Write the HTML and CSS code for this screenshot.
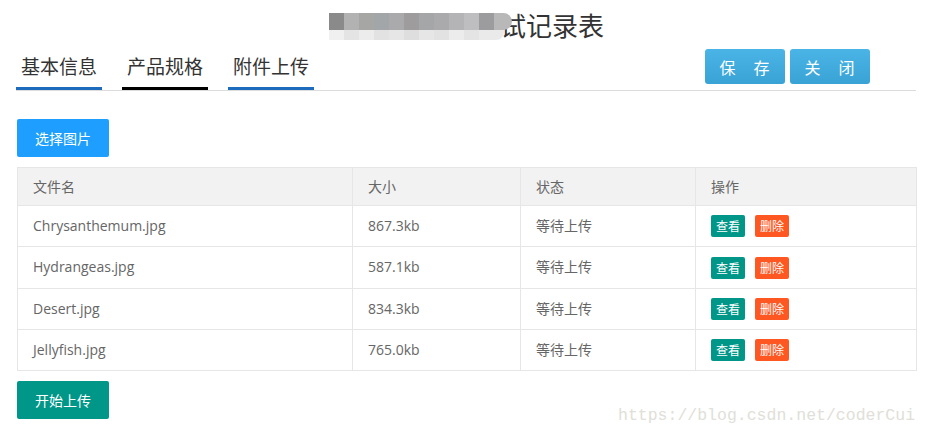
FILE: index.html
```html
<!DOCTYPE html>
<html lang="zh-CN">
<head>
<meta charset="utf-8">
<title>测试记录表</title>
<link rel="stylesheet" href="styles.css">
</head>
<body>
<div class="page">
  <h1 class="title"><span class="mosaic"><span class="mosaic-top"></span><span class="mosaic-bottom"></span></span><span class="title-text">试记录表</span></h1>
  <div class="nav">
    <div class="tab tab-blue">基本信息</div>
    <div class="tab tab-black">产品规格</div>
    <div class="tab tab-blue">附件上传</div>
    <div class="actions">
      <button class="act-btn">保　存</button>
      <button class="act-btn">关　闭</button>
    </div>
  </div>
  <div class="content">
    <button class="btn btn-normal">选择图片</button>
    <table class="files">
      <colgroup>
        <col class="c1"><col class="c2"><col class="c3"><col class="c4">
      </colgroup>
      <thead>
        <tr><th>文件名</th><th>大小</th><th>状态</th><th>操作</th></tr>
      </thead>
      <tbody>
        <tr><td>Chrysanthemum.jpg</td><td>867.3kb</td><td>等待上传</td><td><span class="xs xs-view">查看</span><span class="xs xs-del">删除</span></td></tr>
        <tr><td>Hydrangeas.jpg</td><td>587.1kb</td><td>等待上传</td><td><span class="xs xs-view">查看</span><span class="xs xs-del">删除</span></td></tr>
        <tr><td>Desert.jpg</td><td>834.3kb</td><td>等待上传</td><td><span class="xs xs-view">查看</span><span class="xs xs-del">删除</span></td></tr>
        <tr><td>Jellyfish.jpg</td><td>765.0kb</td><td>等待上传</td><td><span class="xs xs-view">查看</span><span class="xs xs-del">删除</span></td></tr>
      </tbody>
    </table>
    <button class="btn btn-green">开始上传</button>
  </div>
  <div class="watermark">https://blog.csdn.net/coderCui</div>
</div>
</body>
</html>
```
FILE: styles.css
```css
* { box-sizing: border-box; }
html, body { margin: 0; padding: 0; background: #fff; }
body {
  font-family: "Open Sans", "Noto Sans CJK SC", sans-serif;
  color: #333;
  width: 929px;
  height: 437px;
  overflow: hidden;
}
.page { position: relative; width: 929px; height: 437px; }

.title {
  margin: 0;
  height: 44px;
  display: flex;
  justify-content: center;
  align-items: flex-start;
  font-weight: normal;
  font-size: 26px;
  line-height: 30px;
  padding-top: 10px;
  padding-left: 4px;
  color: #333;
  font-family: "Noto Sans CJK SC", sans-serif;
}
.mosaic {
  position: relative;
  z-index: 1;
  display: flex;
  flex-direction: column;
  width: 183px;
  margin-top: 3px;
  margin-right: -12px;
}
.mosaic-top {
  height: 17px;
  border-radius: 0 10px 10px 0;
  background: linear-gradient(to right,
    #8a8a8a 0 15px, #b2b2b2 15px 30px, #a6a6a4 30px 45px, #a2a6a8 45px 60px,
    #aaaaac 60px 75px, #9e9c9c 75px 90px, #a4a6a8 90px 105px, #aaaaac 105px 120px,
    #b4b4b6 120px 135px, #bebec0 135px 150px, #9c9c9e 150px 165px, #b8b8b8 165px 183px);
}
.mosaic-bottom {
  height: 10px;
  margin-right: 8px;
  border-radius: 0 0 8px 0;
  background: linear-gradient(to right,
    #f0f0f0 0 15px, #e4e4e4 15px 30px, #ececec 30px 45px, #e2e2e2 45px 60px,
    #e6e6e6 60px 75px, #dedede 75px 90px, #e6e6e6 90px 105px, #e2e2e2 105px 120px,
    #ececec 120px 135px, #e4e4e4 135px 150px, #eaeaea 150px 175px);
}

.nav {
  display: flex;
  align-items: flex-start;
  margin: 0 13px 0 16px;
  border-bottom: 1px solid #dcdcdc;
  gap: 20px;
}
.tab {
  width: 86px;
  text-align: center;
  font-family: "Noto Sans CJK SC", sans-serif;
  font-size: 19px;
  line-height: 24px;
  padding: 10px 0 9px;
  color: #333;
  border-bottom: 3px solid #1c6bbd;
}
.tab-black { border-bottom-color: #000; }
.actions {
  margin-left: auto;
  margin-right: 46px;
  margin-top: 5px;
  display: flex;
  gap: 5px;
}
.act-btn {
  width: 80px;
  height: 35px;
  border: 0;
  border-radius: 3px;
  background: linear-gradient(#4bb4e6, #3aa3d6);
  color: #fff;
  font-family: "Noto Sans CJK SC", sans-serif;
  font-size: 16px;
  letter-spacing: 1px;
  padding: 0;
}

.content {
  padding: 28px 13px 0 17px;
  display: flex;
  flex-direction: column;
  align-items: flex-start;
}
.btn {
  height: 38px;
  line-height: 38px;
  padding: 0 18px;
  border: 0;
  border-radius: 2px;
  color: #fff;
  font-family: "Noto Sans CJK SC", sans-serif;
  font-size: 14px;
}
.btn-normal { background: #1e9fff; }
.btn-green { background: #009688; margin-top: 10px; }

.files {
  margin-top: 10px;
  width: 899px;
  border-collapse: collapse;
  table-layout: fixed;
  border: 1px solid #e6e6e6;
  color: #666;
  font-size: 14px;
}
.c1 { width: 335px; }
.c2 { width: 168px; }
.c3 { width: 175px; }
.c4 { width: 221px; }
.files th, .files td {
  border: 1px solid #e6e6e6;
  padding: 9px 15px;
  line-height: 20px;
  text-align: left;
  font-weight: normal;
  font-family: "Open Sans", "Noto Sans CJK SC", sans-serif;
}
.files th { background: #f2f2f2; height: 38px; padding-top: 8px; padding-bottom: 8px; }
.files td { height: 41px; }
.xs {
  display: inline-block;
  height: 22px;
  line-height: 22px;
  padding: 0 5px;
  font-size: 12px;
  color: #fff;
  border-radius: 2px;
  vertical-align: middle;
  font-family: "Noto Sans CJK SC", sans-serif;
}
.xs-view { background: #009688; }
.xs-del { background: #ff5722; margin-left: 10px; }

.watermark {
  position: absolute;
  left: 618px;
  top: 406px;
  font-family: "Liberation Mono", monospace;
  font-size: 16.5px;
  line-height: 20px;
  color: #e0e0d8;
}
```
